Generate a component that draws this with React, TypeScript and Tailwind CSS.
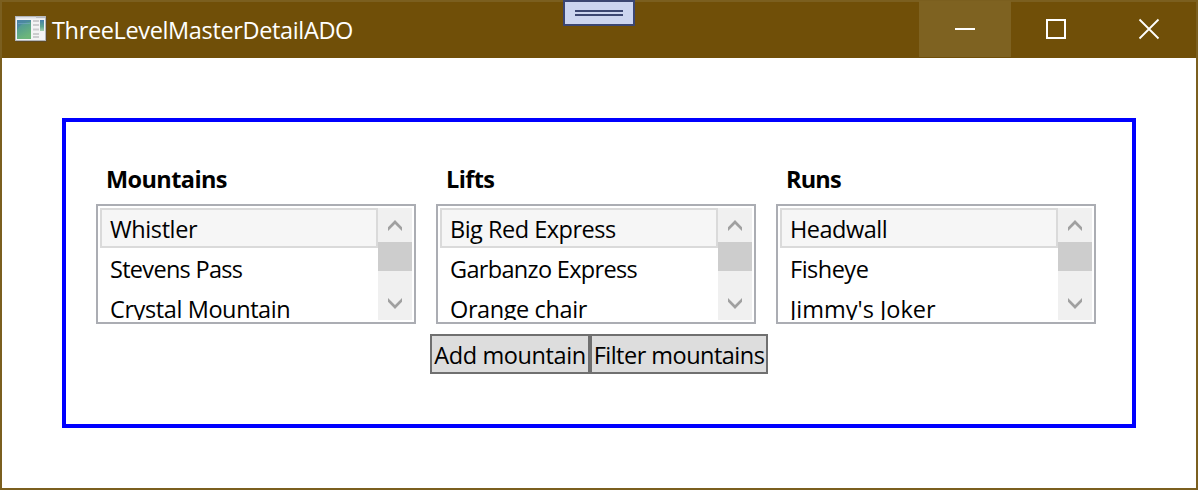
import React from "react";

type Entry = { text: string; tracking: string };
type ListProps = { title: Entry; items: Entry[] };

const lists: ListProps[] = [
  {
    title: { text: "Mountains", tracking: "tracking-[-0.6px]" },
    items: [
      { text: "Whistler", tracking: "tracking-[-0.4px]" },
      { text: "Stevens Pass", tracking: "tracking-[-0.7px]" },
      { text: "Crystal Mountain", tracking: "tracking-[-0.4px]" },
    ],
  },
  {
    title: { text: "Lifts", tracking: "tracking-[-0.6px]" },
    items: [
      { text: "Big Red Express", tracking: "tracking-[-0.5px]" },
      { text: "Garbanzo Express", tracking: "tracking-[-0.67px]" },
      { text: "Orange chair", tracking: "tracking-[-0.4px]" },
    ],
  },
  {
    title: { text: "Runs", tracking: "tracking-[-0.8px]" },
    items: [
      { text: "Headwall", tracking: "tracking-[-0.5px]" },
      { text: "Fisheye", tracking: "tracking-[-0.5px]" },
      { text: "Jimmy's Joker", tracking: "tracking-[0px]" },
    ],
  },
];

function AppIcon() {
  return (
    <svg width="32" height="26" viewBox="0 0 32 26" className="-mt-0.5 shrink-0">
      <defs>
        <linearGradient id="pane" x1="0" y1="0" x2="0.4" y2="1">
          <stop offset="0" stopColor="#4f8cab" />
          <stop offset="0.5" stopColor="#58a28c" />
          <stop offset="1" stopColor="#6cb67a" />
        </linearGradient>
        <linearGradient id="bar" x1="0" y1="0" x2="0" y2="1">
          <stop offset="0" stopColor="#467fa8" />
          <stop offset="0.6" stopColor="#5fa690" />
          <stop offset="1" stopColor="#a5cfb0" />
        </linearGradient>
      </defs>
      <rect x="1" y="1" width="30.5" height="24.7" fill="#5a4a30" />
      <rect x="0" y="0" width="31" height="25" fill="#b2b5ba" />
      <rect x="1" y="1" width="29" height="23" fill="#f3f3f4" />
      <rect x="1" y="1" width="29" height="1.5" fill="#dcdfe4" />
      <rect x="21" y="0" width="9" height="2" fill="#b9bcc1" />
      <rect x="2" y="4" width="14" height="19" fill="url(#pane)" />
      <path d="M2 14C5 8 10 6 16 6V4H2Z" fill="#4379a6" opacity="0.5" />
      <path d="M3 7.5h12" stroke="#79a9c8" opacity="0.6" />
      <path d="M18 5h6M18 9h6M18 13.5h6M18 18h6M18 21h6" stroke="#cbccce" strokeWidth="1.8" />
      <rect x="25" y="4" width="4" height="11" fill="url(#bar)" />
    </svg>
  );
}

function ScrollBar() {
  return (
    <div className="flex w-[34px] shrink-0 flex-col bg-[#f0f0f0]">
      <div className="h-[34px]">
        <svg width="34" height="34" viewBox="0 0 34 34">
          <path d="M10 19.2L17 12L24 19.2V23L17 15.9L10 23Z" fill="#a0a0a0" />
        </svg>
      </div>
      <div className="h-[29px] bg-[#cdcdcd]" />
      <div className="mt-auto h-[34px]">
        <svg width="34" height="34" viewBox="0 0 34 34">
          <path d="M10 12V15.8L17 23L24 15.8V12L17 19.1Z" fill="#a0a0a0" />
        </svg>
      </div>
    </div>
  );
}

function ListPanel({ title, items }: ListProps) {
  return (
    <section className="w-80">
      <h2 className={`flex h-10 items-center pb-0.5 pl-2.5 font-bold ${title.tracking}`}>{title.text}</h2>
      <div className="mt-1 flex h-[120px] border-2 border-[#abadb3] p-0.5">
        <ul className="min-w-0 flex-1 overflow-hidden">
          {items.map((item, i) => (
            <li
              key={item.text}
              className={`flex h-10 items-center border-2 pt-0.5 pl-2 ${
                i === 0 ? "border-[#dadada] bg-[#f6f6f6]" : "border-transparent"
              }`}
            >
              <span className={`whitespace-nowrap ${item.tracking}`}>{item.text}</span>
            </li>
          ))}
        </ul>
        <ScrollBar />
      </div>
    </section>
  );
}

export default function App() {
  return (
    <div className="flex h-[490px] w-[1198px] flex-col border-2 border-[#7b5f1f] bg-white font-['Open_Sans',sans-serif] text-[23.5px] leading-8 text-black">
      <header className="relative flex h-14 shrink-0 bg-[#704f08] text-white">
        <div className="flex items-center pl-[13px]">
          <AppIcon />
          <span className="ml-[5px] whitespace-nowrap tracking-[-0.36px]">ThreeLevelMasterDetailADO</span>
        </div>
        <div className="ml-auto flex">
          <button className="-mt-px h-14 w-[92px] bg-[#7e6221]" aria-label="Minimize">
            <svg width="92" height="56" viewBox="0 0 92 56">
              <path d="M36 28h20" stroke="white" strokeWidth="2" />
            </svg>
          </button>
          <button className="h-14 w-[92px]" aria-label="Maximize">
            <svg width="92" height="56" viewBox="0 0 92 56">
              <rect x="36" y="18" width="18" height="18" fill="none" stroke="white" strokeWidth="2" />
            </svg>
          </button>
          <button className="h-14 w-[93px]" aria-label="Close">
            <svg width="93" height="56" viewBox="0 0 93 56">
              <path d="M36.5 17.5l19 19M55.5 17.5l-19 19" stroke="white" strokeWidth="1.8" />
            </svg>
          </button>
        </div>
        <div className="absolute -top-0.5 left-[561px] flex h-[26px] w-[72px] flex-col items-center gap-0.5 border-2 border-[#3b4672] bg-[#ccd5f0] pt-2">
          <div className="h-0.5 w-12 bg-[#3b4672]" />
          <div className="h-0.5 w-12 bg-[#3b4672]" />
        </div>
      </header>
      <main className="mx-[60px] mt-[60px] h-[310px] border-4 border-[#0000ff] px-[30px] pt-[38px]">
        <div className="flex gap-5">
          {lists.map((list) => (
            <ListPanel key={list.title.text} {...list} />
          ))}
        </div>
        <div className="mt-2.5 ml-[334px] flex">
          <button className="flex h-10 w-40 items-center justify-center border-2 border-[#707070] bg-[#dddddd] pt-0.5 whitespace-nowrap">
            <span className="tracking-[-0.4px]">Add mountain</span>
          </button>
          <button className="flex h-10 w-[178px] items-center justify-center border-2 border-[#707070] bg-[#dddddd] pt-0.5 whitespace-nowrap">
            <span className="tracking-[-0.52px]">Filter mountains</span>
          </button>
        </div>
      </main>
    </div>
  );
}
